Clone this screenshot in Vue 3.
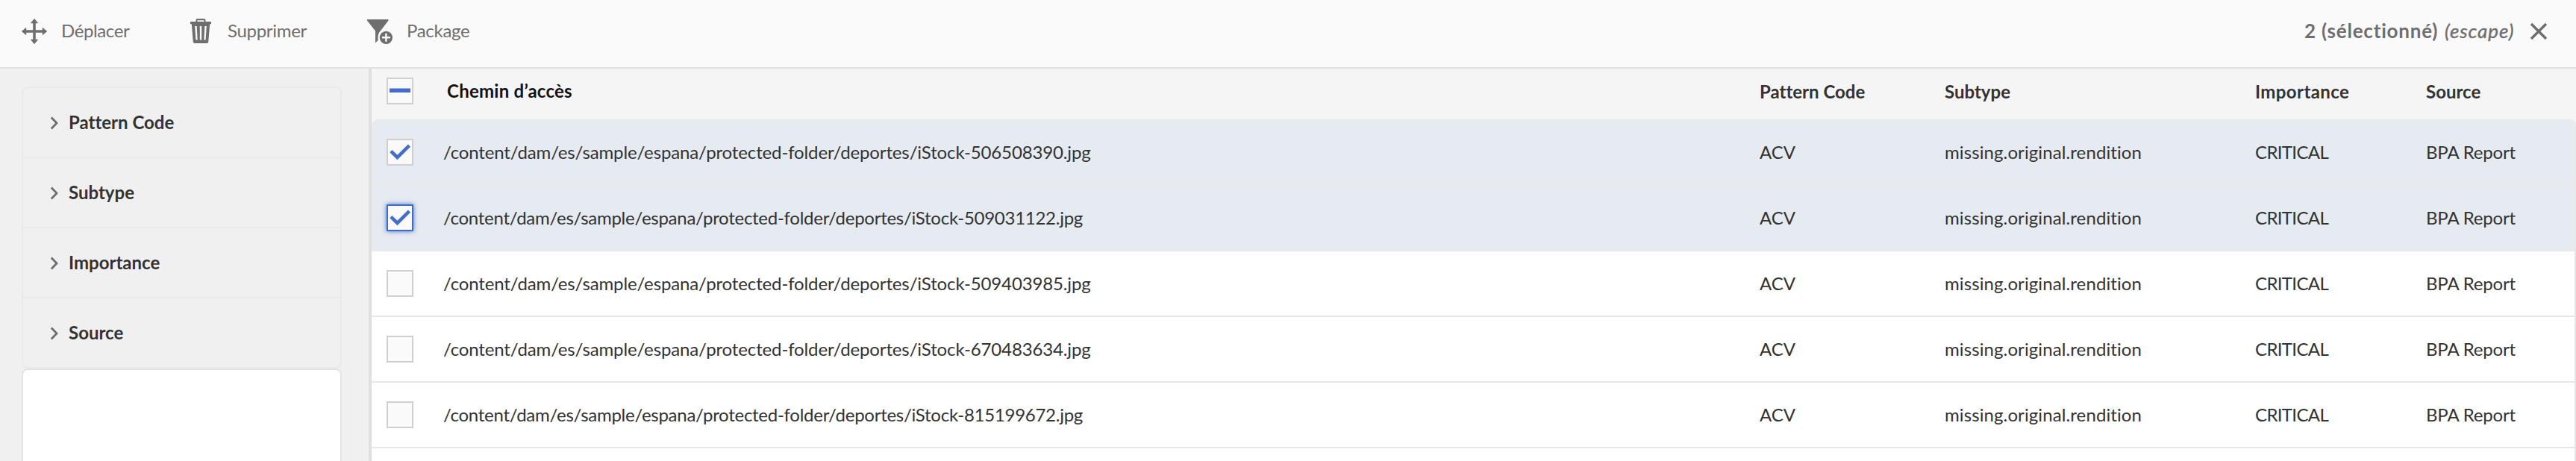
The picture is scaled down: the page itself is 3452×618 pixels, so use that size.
<script setup>
const facets = ['Pattern Code', 'Subtype', 'Importance', 'Source']
const base = '/content/dam/es/sample/espana/protected-folder/deportes/iStock-'
const rows = [
  { file: '506508390', checked: true },
  { file: '509031122', checked: true, focused: true, narrow: true },
  { file: '509403985' },
  { file: '670483634' },
  { file: '815199672', narrow: true }
]
</script>

<template>
  <div class="app">
    <header class="toolbar">
      <button class="action move">
        <svg width="36" height="36" viewBox="0 0 36 36" fill="currentColor">
          <path d="M18 .8l5.2 6.4h-3.4v9h9v-3.4L35.2 18l-6.4 5.2v-3.4h-9v9h3.4L18 35.2l-5.2-6.4h3.4v-9h-9v3.4L.8 18l6.400-5.200v3.400h9v-9h-3.400z" />
        </svg>
        <span class="t">Déplacer</span>
      </button>
      <button class="action remove">
        <svg width="36" height="36" viewBox="0 0 36 36" fill="currentColor">
          <path fill-rule="evenodd" d="M11.5 5V3Q11.5 1 13.5 1H22.5Q24.5 1 24.5 3V5H32V8.2H30.2L28.2 32.2Q28 34 26.2 34H9.800Q8 34 7.800 32.200L5.800 8.200H4V5ZM13.500 5H22.500V3.200H13.500ZM10.200 11L11.400 29.500H13.700L12.700 11ZM16.800 11V29.500H19.200V11ZM23.300 11L22.300 29.500H24.600L25.800 11Z" />
        </svg>
        <span class="t">Supprimer</span>
      </button>
      <button class="action package">
        <svg width="36" height="36" viewBox="0 0 36 36" fill="currentColor">
          <path d="M2 2H30.500V3.500L19.800 17.500Q16.400 20.800 16.400 26.500L16.500 30L13 33.500V17.500L2 3.500Z" />
          <circle cx="27.400" cy="26.300" r="8.600" />
          <path d="M27.400 20.800v11M21.900 26.300h11" stroke="#fafafa" stroke-width="2.400" />
        </svg>
        <span class="t">Package</span>
      </button>
      <div class="selection">
        <span class="count">2 (sélectionné)</span>
        <i class="escape">(escape)</i>
        <svg class="close" width="24" height="24" viewBox="0 0 24 24" fill="none" stroke="currentColor" stroke-width="3.400">
          <path d="M2 2l20 20M22 2L2 22" />
        </svg>
      </div>
    </header>

    <div class="body">
      <aside class="rail">
        <ul class="facets">
          <li v-for="f in facets" :key="f">
            <svg width="12" height="18" viewBox="0 0 12 18" fill="none" stroke="#6e6e6e" stroke-width="2.800">
              <path d="M1.800 1.500L9 9l-7.200 7.500" />
            </svg>
            <span>{{ f }}</span>
          </li>
        </ul>
        <div class="panel"></div>
      </aside>

      <main class="table">
        <div class="row head">
          <span class="box"><svg width="36" height="36"><rect x="4" y="14.500" width="28" height="5.500" /></svg></span>
          <span class="path t">Chemin d’accès</span>
          <span class="code t">Pattern Code</span>
          <span class="sub t">Subtype</span>
          <span class="imp t">Importance</span>
          <span class="src t">Source</span>
        </div>
        <div class="rows">
          <div v-for="r in rows" :key="r.file" class="row" :class="{ selected: r.checked }">
            <span class="box" :class="{ focused: r.focused }">
              <svg v-if="r.checked" width="36" height="36"><path d="M4.300 18.200L7.500 14.900L14.400 21.700L28.900 7.500L32 10.700L14.400 28.300Z" /></svg>
            </span>
            <span class="path t" :class="{ narrow: r.narrow }">{{ base + r.file }}.jpg</span>
            <span class="code t">ACV</span>
            <span class="sub t">missing.original.rendition</span>
            <span class="imp t">CRITICAL</span>
            <span class="src t">BPA Report</span>
          </div>
        </div>
      </main>
    </div>
  </div>
</template>

<style>
body { margin: 0; overflow: hidden; }
</style>

<style scoped>
.app {
  height: 618px;
  display: flex;
  flex-direction: column;
  overflow: hidden;
  font-family: Lato, "Open Sans", sans-serif;
  font-size: 24px;
  line-height: 30px;
  font-variant-ligatures: none;
  color: #323232;
  white-space: nowrap;
}
.app, .app * { box-sizing: border-box; }
.toolbar {
  flex: none;
  height: 92px;
  display: flex;
  align-items: flex-start;
  background: #fafafa;
  border-bottom: 2px solid #e1e1e1;
  color: #6e6e6e;
}
.action {
  display: flex;
  padding: 0;
  border: 0;
  background: none;
  font: inherit;
  color: inherit;
  letter-spacing: -0.3px;
  margin-top: 24px;
}
.action .t { margin-top: 2px; }
.move { width: 223px; margin-left: 28px; gap: 18px; letter-spacing: -0.4px; }
.remove { width: 239px; gap: 18px; }
.package { gap: 19px; }
.selection { margin: 26px 38px 0 auto; display: flex; font-size: 26px; }
.count { width: 188px; font-weight: 700; letter-spacing: 0.8px; }
.escape { width: 114px; letter-spacing: 0.9px; -webkit-text-stroke: 0.4px currentColor; }
.close { margin-top: 4px; }
.body { flex: 1; display: flex; min-height: 0; }
.rail {
  width: 498px;
  padding: 24px 36px 0 29px;
  background: #f0f0f0;
  border-right: 4px solid #dfdfdf;
}
.facets {
  list-style: none;
  margin: 0;
  padding: 0;
  border: 2px solid #e9e9e9;
  border-radius: 8px;
}
.facets li {
  height: 94px;
  display: flex;
  padding: 31px 0 0 36px;
  font-weight: 700;
  border-bottom: 2px solid #e9e9e9;
}
.facets li:last-child { height: 92px; border-bottom: 0; }
.facets svg { margin: 7px 13px 0 0; }
.panel {
  height: 200px;
  background: #fff;
  border: 2px solid #e3e3e3;
  border-radius: 8px;
}
.table { flex: 1; background: #f5f5f5; }
.row {
  display: grid;
  grid-template-columns: 76px 1764px 248px 416px 229px 1fr;
  padding: 25px 0 0 20px;
  height: 88px;
}
.head { height: 68px; padding-top: 12px; font-weight: 700; }
.rows {
  height: 480px;
  background: #fff;
  border: solid #e8e8e8;
  border-width: 1px 2px 0 0;
  border-radius: 8px 8px 0 0;
  overflow: hidden;
}
.rows .row { border-bottom: 2px solid #e8e8e8; }
.selected { background: #e6eaf1; }
.row .t { margin-top: 3px; }
.box {
  width: 36px;
  height: 36px;
  background: #fafafa;
  box-shadow: inset 0 0 0 2px #cfcfcf;
}
.box svg { display: block; fill: #426dc8; }
.focused { box-shadow: inset 0 0 0 2px #3f6ec7, 0 0 6px #426dc8; }
.rows .path { letter-spacing: -0.13px; }
.rows .path.narrow { letter-spacing: -0.27px; }
.rows .sub { letter-spacing: 0.1px; }
.head .t { margin-top: 4px; }
.head .path { margin-top: 3px; color: #111; padding-left: 5px; letter-spacing: 0.25px; }
.rows .imp { letter-spacing: -0.65px; }
.rows .src { letter-spacing: -0.17px; }
.head .imp { letter-spacing: 0.4px; }
</style>
